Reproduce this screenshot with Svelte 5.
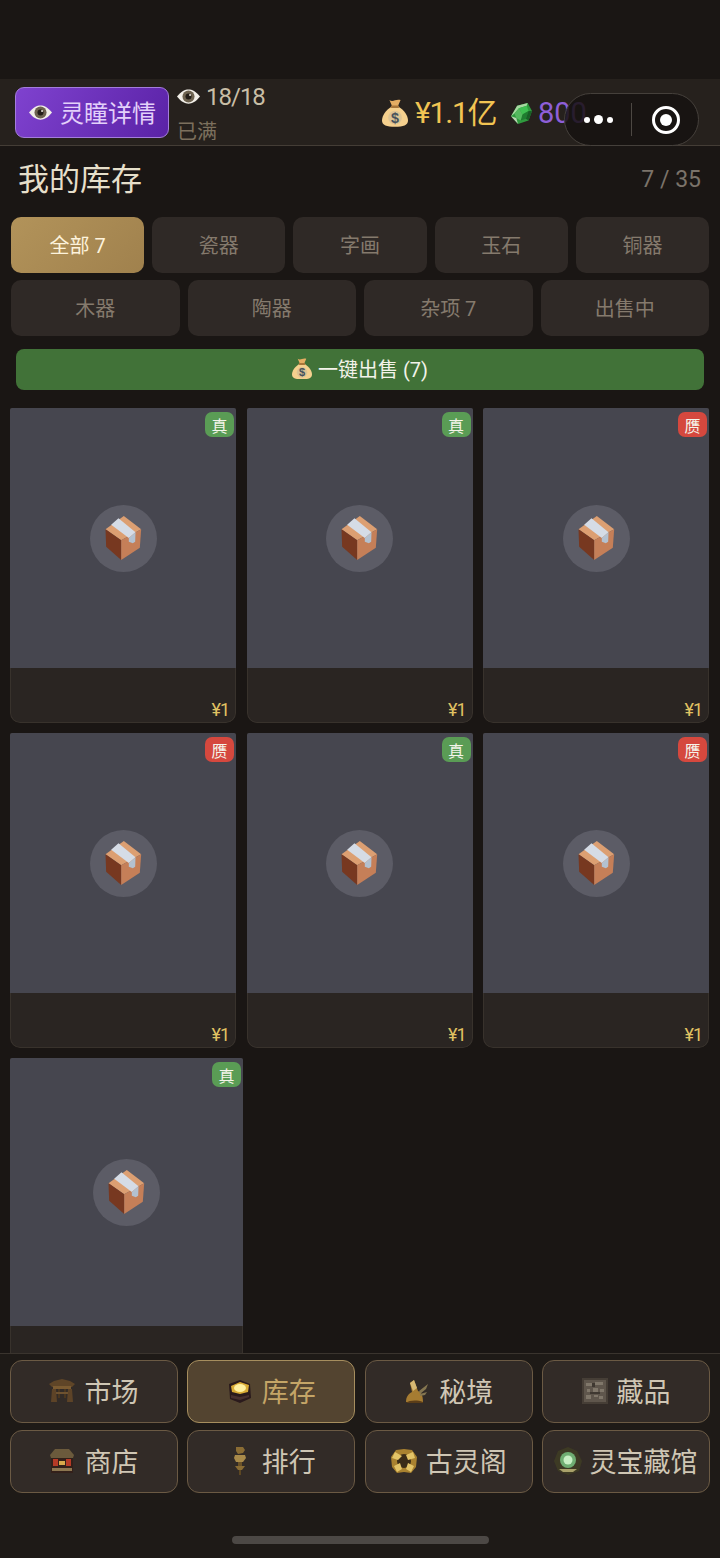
<script>
	const tabsTop = [
		{ label: '全部 7', active: true },
		{ label: '瓷器' },
		{ label: '字画' },
		{ label: '玉石' },
		{ label: '铜器' }
	];
	const tabsBottom = ['木器', '陶器', '杂项 7', '出售中'];

	const items = [
		{ real: true },
		{ real: true },
		{ real: false },
		{ real: false },
		{ real: true },
		{ real: false },
		{ real: true, wide: true }
	];

	const nav = [
		{ label: '市场', icon: 'gate' },
		{ label: '库存', icon: 'chest', active: true },
		{ label: '秘境', icon: 'relic' },
		{ label: '藏品', icon: 'scroll' },
		{ label: '商店', icon: 'shop' },
		{ label: '排行', icon: 'lantern' },
		{ label: '古灵阁', icon: 'ring' },
		{ label: '灵宝藏馆', icon: 'orb' }
	];
</script>

{#snippet eye(w)}
	<svg width={w} height={w * 0.66} viewBox="0 0 32 21" class="icon">
		<path d="M0 10.500C6 3 11 0.500 16 0.500s10 2.500 16 10c-6 7.500-11 10-16 10s-10-2.500-16-10z" fill="#f2efe8" />
		<circle cx="16" cy="10.500" r="8.400" fill="#6e6350" />
		<circle cx="16" cy="10.500" r="4.200" fill="#231d17" />
		<circle cx="18.200" cy="8.300" r="1.400" fill="#e8e4da" />
	</svg>
{/snippet}

{#snippet moneybag(s)}
	<svg width={s} height={s * 1.08} viewBox="0 0 28 30" class="icon">
		<path d="M8 1c2 1.500 4 1 6 .3s4-1 6-.3l-3 7h-6z" fill="#e5ad63" />
		<path d="M10.500 8h7C24 12 28 18 28 23c0 5-5 6.800-14 6.800S0 28 0 23c0-5 4-11 10.500-15z" fill="#f5d08e" />
		<rect x="9.500" y="7" width="9" height="2.600" rx="1" fill="#a9763a" />
		<circle cx="14" cy="20" r="7.400" fill="#dcc393" />
		<text x="14" y="25.500" text-anchor="middle" font-size="15.500" font-weight="700" fill="#47525c" font-family="Liberation Sans, sans-serif">$</text>
	</svg>
{/snippet}

{#snippet gem()}
	<svg width="21" height="21" viewBox="0 0 24 24" class="icon">
		<path d="M7 3l12-3 5 9-4 11-12 4-8-9z" fill="#2f9a3e" />
		<path d="M7 3l12-3-1 3-9 3-5 6-4 3z" fill="#a6d8a0" />
		<path d="M9 6l9-3 2 6-7 4z" fill="#3fc052" />
		<path d="M13 13l7-4-3 9-6 2z" fill="#1f7d30" />
		<path d="M4 12l5-6 4 7-2 7-5-3z" fill="#54b95e" />
		<path d="M0 15l6 2 2 7z" fill="#b9d6b2" />
		<path d="M24 9l-4 11-3-2 3-9z" fill="#186026" />
	</svg>
{/snippet}

{#snippet box()}
	<svg width="39" height="46" viewBox="80 62 114 138" class="icon">
		<path d="M138 65l52 40-60 33-47-33z" fill="#dc9f72" />
		<path d="M83 105l47 33v59l-45-40z" fill="#773820" />
		<path d="M130 138l60-33-4 55-56 37z" fill="#c57f58" />
		<path d="M100 91l22-19 51 42-20 17z" fill="#d5dce6" />
		<path d="M153 131l20-17-1 28-7 5-12-5z" fill="#b3c1d0" />
	</svg>
{/snippet}

{#snippet navIcon(name)}
	<svg width="28" height="28" viewBox="0 0 28 28" class="icon nav-icon">
		{#if name === 'gate'}
			<path d="M1 7L6 4l8-2 8 2 5 3-3 3H4z" fill="#5f4527" />
			<rect x="5" y="9" width="18" height="3" fill="#7b5b31" />
			<path d="M4 12h4l1 13H3zM20 12h4l1 13h-6z" fill="#5d4327" />
			<path d="M10 12h2v9h-2zM16 12h2v9h-2z" fill="#4a361f" />
			<path d="M8 15h12v2H8z" fill="#6e5230" />
		{:else if name === 'chest'}
			<path d="M3 7l11-4 10 4 1 14-11 5-10-4z" fill="#2a1a1c" />
			<path d="M5 9l9-4 9 3-1 7-8 2-8-2z" fill="#d9ab35" />
			<ellipse cx="14" cy="11" rx="6" ry="4" fill="#fff0a0" />
			<path d="M5 18l9 2 9-2v2l-9 3-9-2z" fill="#47302f" />
		{:else if name === 'relic'}
			<path d="M3 25c0-5 2-8 6-10L7 6l4-3 4 11c3 1 5 4 5 11z" fill="#a67c32" />
			<path d="M7 6l4-3 3 8-4 3z" fill="#d6b873" />
			<path d="M16 14l9-7-2 5-6 5zM17 17l7-2-2 3-5 1z" fill="#857650" />
			<path d="M3 26c4-3 11-3 17-1v1z" fill="#5b3d18" />
		{:else if name === 'scroll'}
			<rect x="1" y="1" width="26" height="26" fill="#463e36" />
			<rect x="3" y="3" width="22" height="22" fill="#5f564c" />
			<path d="M5 6h6v3H5zM14 5h8v3h-8zM6 12h3v3H6zM12 11h5v4h-5zM19 12h4v3h-4zM5 18h5v4H5zM13 18h4v2h-4zM18 19h4v3h-4z" fill="#80776a" />
			<path d="M11 6h3v4h-3zM9 15h10v2H9z" fill="#3f3831" />
		{:else if name === 'shop'}
			<path d="M2 8L7 2h14l5 6-1 3H3z" fill="#6b5a3c" />
			<rect x="3" y="11" width="22" height="15" fill="#33201a" />
			<rect x="5" y="12" width="5" height="7" fill="#b63a26" />
			<rect x="18" y="12" width="5" height="7" fill="#b63a26" />
			<rect x="11" y="14" width="6" height="4" fill="#d8a94c" />
			<rect x="4" y="21" width="20" height="3" fill="#8c7650" />
		{:else if name === 'lantern'}
			<path d="M10 0h7l2 3-2 3-5 1-2-3z" fill="#8a6c34" />
			<path d="M9 8h10l1 3-3 4h-7l-2-4z" fill="#a98a4a" />
			<rect x="12" y="15" width="4" height="4" fill="#6b5228" />
			<path d="M9 19h10l-3 4h-4z" fill="#8a6c34" />
			<rect x="13" y="23" width="2" height="5" fill="#5d4722" />
		{:else if name === 'ring'}
			<path d="M6 3l8-1 8 1 5 7-1 10-5 6-7-1-7 1-5-6-1-10z" fill="#a98230" />
			<circle cx="14" cy="14" r="7" fill="#3a2c18" />
			<path d="M5 5l7 4-4 4-6-2zM23 5l2 6-7 2-2-5zM4 19l6-3 2 6-5 3zM24 19l-6-3-2 6 5 3z" fill="#e3c467" />
		{:else if name === 'orb'}
			<path d="M14 0l9 4 5 10-3 10-11 4-10-4-4-10 4-10z" fill="#3d3a24" />
			<circle cx="14" cy="13" r="8" fill="#6fae72" />
			<circle cx="14" cy="13" r="4.500" fill="#c8f0c4" />
			<path d="M5 22h18l-4 3H9z" fill="#a9a16a" />
		{/if}
	</svg>
{/snippet}

<div class="page">
	<div class="status"></div>

	<header class="topbar">
		<button class="detail">
			{@render eye(23)}
			<span>灵瞳详情</span>
		</button>
		<div class="charges">
			<div class="count">{@render eye(23)}<span>18/18</span></div>
			<div class="full">已满</div>
		</div>
		<div class="money">
			{@render moneybag(26)}
			<span class="gold">¥1.1亿</span>
			{@render gem()}
			<span class="crystal">800</span>
		</div>
		<div class="capsule">
			<div class="dots"><i></i><i class="mid"></i><i></i></div>
			<div class="sep"></div>
			<svg width="30" height="30" viewBox="0 0 30 30" class="icon">
				<circle cx="15" cy="15" r="12.500" fill="none" stroke="#fff" stroke-width="3" />
				<circle cx="15" cy="15" r="6" fill="#fff" />
			</svg>
		</div>
	</header>

	<div class="title-row">
		<h1>我的库存</h1>
		<span class="capacity">7 / 35</span>
	</div>

	<div class="tabs">
		{#each tabsTop as tab}
			<button class="tab" class:active={tab.active}><span>{tab.label}</span></button>
		{/each}
	</div>
	<div class="tabs second">
		{#each tabsBottom as label}
			<button class="tab"><span>{label}</span></button>
		{/each}
	</div>

	<button class="sell">{@render moneybag(20)}<span>一键出售 (7)</span></button>

	<main class="grid">
		{#each items as item}
			<div class="card" class:wide={item.wide}>
				<div class="thumb">
					<div class="circle">{@render box()}</div>
					<span class="badge" class:fake={!item.real}>{item.real ? '真' : '赝'}</span>
				</div>
				<div class="foot"><span class="price">¥1</span></div>
			</div>
		{/each}
	</main>

	<nav class="nav">
		{#each nav as n}
			<button class="nav-btn" class:active={n.active}>
				{@render navIcon(n.icon)}
				<span>{n.label}</span>
			</button>
		{/each}
	</nav>

	<div class="home"><div class="bar"></div></div>
</div>

<style>
	:global(body) {
		background: #1a1614;
	}

	.page {
		position: relative;
		height: 1558px;
		display: flex;
		flex-direction: column;
		overflow: hidden;
		background: #1a1614;
		font-family: Roboto, 'Noto Sans CJK SC', sans-serif;
		color: #e8e0cc;
	}

	button {
		font-family: inherit;
		cursor: pointer;
	}

	.icon {
		display: block;
		flex: none;
	}

	.status {
		height: 79px;
		flex: none;
	}

	.topbar {
		height: 67px;
		flex: none;
		box-sizing: border-box;
		display: flex;
		align-items: flex-start;
		padding: 8px 0 0 15px;
		background: #26211d;
		border-bottom: 1px solid #443d36;
	}

	.detail {
		width: 154px;
		height: 51px;
		display: flex;
		align-items: center;
		gap: 8px;
		padding: 0 0 2px 13px;
		border: 1px solid #a47cdc;
		border-radius: 9px;
		background: linear-gradient(120deg, #7f42cf, #5a22a6);
		color: #e3d0fa;
		font-size: 24px;
		white-space: nowrap;
	}

	.detail .icon {
		margin-top: 3px;
	}

	.charges {
		margin-left: 8px;
		width: 120px;
	}

	.count {
		display: flex;
		align-items: center;
		gap: 6px;
		height: 19px;
		font-size: 24px;
		letter-spacing: -1px;
		color: #c9bea6;
	}

	.full {
		margin-top: 13px;
		font-size: 20px;
		line-height: 26px;
		color: #7c705d;
	}

	.money {
		position: absolute;
		top: 94px;
		left: 382px;
		display: flex;
		align-items: center;
	}

	.gold {
		margin-left: 7px;
		width: 96px;
		font-size: 30px;
		line-height: 38px;
		letter-spacing: -1.2px;
		color: #f1c453;
	}

	.crystal {
		margin-left: 6px;
		font-size: 29px;
		line-height: 38px;
		color: #8e5fd8;
	}

	.capsule {
		position: absolute;
		top: 93px;
		left: 564px;
		width: 135px;
		height: 53px;
		box-sizing: border-box;
		display: flex;
		align-items: center;
		border: 1px solid #45403b;
		border-radius: 27px;
		background: rgba(22, 18, 16, 0.85);
	}

	.dots {
		display: flex;
		align-items: center;
		gap: 4px;
		margin-left: 19px;
		width: 36px;
	}

	.dots i {
		width: 6px;
		height: 6px;
		border-radius: 50%;
		background: #fff;
	}

	.dots .mid {
		width: 9px;
		height: 9px;
	}

	.sep {
		width: 1px;
		height: 33px;
		margin: 0 19px 0 11px;
		background: #4d4843;
	}

	.title-row {
		height: 66px;
		flex: none;
		box-sizing: border-box;
		display: flex;
		align-items: center;
		justify-content: space-between;
		padding: 0 19px 0 18px;
	}

	h1 {
		margin: 0;
		padding-top: 1px;
		font-size: 31px;
		font-weight: 400;
		line-height: 65px;
		color: #e6dfca;
	}

	.capacity {
		font-size: 23px;
		color: #7b736a;
	}

	.tabs {
		display: flex;
		gap: 8px;
		padding: 5px 11px 0;
		flex: none;
	}

	.second {
		padding-top: 7px;
	}

	.tab {
		flex: 1 1 0;
		height: 56px;
		padding: 0 0 2px;
		border: none;
		border-radius: 10px;
		background: #2f2926;
		color: #857a6d;
		font-size: 20px;
	}

	.tab.active {
		background: linear-gradient(135deg, #b2935a, #a0814d);
		color: #fdf3dc;
	}

	.sell {
		flex: none;
		height: 41px;
		margin: 13px 16px 0;
		padding: 0 0 2px;
		display: flex;
		align-items: center;
		justify-content: center;
		gap: 6px;
		border: none;
		border-radius: 8px;
		background: #417238;
		color: #f3f3ea;
		font-size: 20px;
	}

	.grid {
		flex: 1 1 0;
		min-height: 0;
		overflow: hidden;
		display: flex;
		flex-wrap: wrap;
		align-content: flex-start;
		gap: 10px 10.5px;
		padding: 18px 10px 0;
	}

	.card {
		flex: 0 0 226px;
		background: #2a2522;
		border-radius: 2px 2px 10px 10px;
		overflow: hidden;
	}

	.card.wide {
		flex-basis: 233px;
	}

	.thumb {
		position: relative;
		aspect-ratio: 226 / 260;
		display: flex;
		align-items: center;
		justify-content: center;
		background: #46464f;
	}

	.circle {
		width: 67px;
		height: 67px;
		display: flex;
		align-items: center;
		justify-content: center;
		border-radius: 50%;
		background: #5c5c66;
	}

	.badge {
		position: absolute;
		top: 4px;
		right: 2px;
		width: 29px;
		height: 25px;
		display: flex;
		align-items: center;
		justify-content: center;
		border-radius: 7px;
		background: #5a9c55;
		color: #f4f4ea;
		font-size: 16px;
	}

	.badge.fake {
		background: #d5483e;
	}

	.foot {
		height: 55px;
		box-sizing: border-box;
		display: flex;
		align-items: flex-end;
		justify-content: flex-end;
		padding: 0 6px 0;
		border: 1px solid #38322c;
		border-top: none;
		border-radius: 0 0 10px 10px;
	}

	.price {
		font-size: 18px;
		line-height: 24px;
		letter-spacing: -1px;
		color: #e0c263;
	}

	.nav {
		flex: none;
		display: grid;
		grid-template-columns: repeat(4, 1fr);
		gap: 7px 9.5px;
		padding: 6px 10px 7px;
		background: #1e1a17;
		border-top: 1px solid #3a342e;
	}

	.nav-btn {
		height: 63px;
		box-sizing: border-box;
		display: flex;
		align-items: center;
		justify-content: center;
		gap: 8px;
		padding: 0 1px 2px 0;
		border: 1px solid #6b5a44;
		border-radius: 12px;
		background: #322b27;
		color: #cfc6b4;
		font-size: 27px;
		white-space: nowrap;
	}

	.nav-btn.active {
		background: #534430;
		border-color: #a68e5e;
		color: #c4a567;
	}

	.nav-icon {
		filter: blur(0.5px);
	}

	.home {
		flex: none;
		height: 58px;
		box-sizing: border-box;
		padding-top: 36px;
		display: flex;
		justify-content: center;
		background: #1e1a17;
	}

	.bar {
		width: 257px;
		height: 8px;
		border-radius: 4px;
		background: #4c4845;
	}
</style>
